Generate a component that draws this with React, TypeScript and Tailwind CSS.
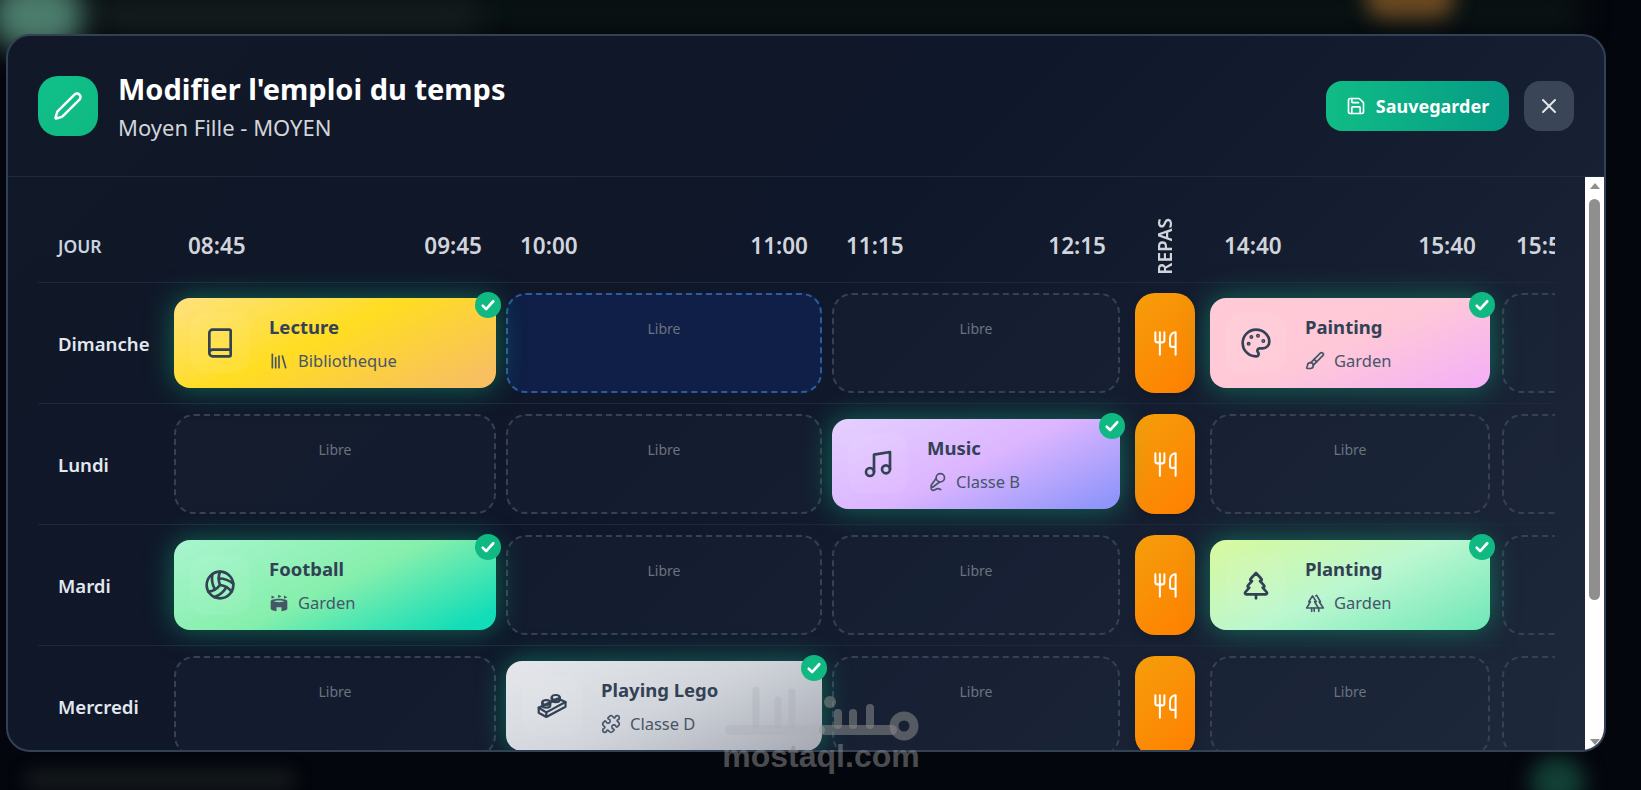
import React from "react";
import {
  Pen, Save, X, Book, Library, Palette, Brush, Music, MicVocal, Volleyball, Puzzle, TreePine, Utensils,
} from "lucide-react";
import { MdStadium } from "react-icons/md";

const cols = "grid grid-cols-[136px_332px_326px_303px_75px_292px_200px]";
const pads = ["", "pr-[10px]", "pr-[10px]", "pr-[15px]", "pr-[15px]", "pr-[12px]", "pr-[12px]"];

function LegoBrick({ size = 32 }: { size?: number }) {
  return (
    <svg width={size} height={size} viewBox="0 0 32 32" fill="none" stroke="currentColor" strokeWidth="2.2" strokeLinecap="round" strokeLinejoin="round">
      <path d="M2.7 17.7 L10.3 22.4 L29.5 12 L21.8 8.6 Z" />
      <path d="M2.7 17.7 V22.7 L10.3 27 L29.5 16.8 V12 M10.3 22.4 V27" />
      <ellipse cx="10.3" cy="12.6" rx="4" ry="2.4" />
      <path d="M6.3 12.6 V15.2 a4 2.4 0 0 0 8 0 V12.6" />
      <ellipse cx="19.7" cy="7.4" rx="4" ry="2.4" />
      <path d="M15.7 7.4 V9.8 a4 2.4 0 0 0 8 0 V7.4" />
    </svg>
  );
}

function TwinPines({ size = 20 }: { size?: number }) {
  return (
    <svg width={size} height={size} viewBox="0 0 24 24" fill="none" stroke="currentColor" strokeWidth="2" strokeLinecap="round" strokeLinejoin="round">
      <path d="M9 3.5 L4.5 10.5 H6.5 L2 18 H16 L11.5 10.5 H13.5 Z" />
      <path d="M13 3.5 L14 2.8 L18.5 10.5 H17 L22 18 H16" />
      <path d="M8 18 V22 M11 18 V22 M16.5 18 V22" />
    </svg>
  );
}

type CardData = {
  title: string;
  place: string;
  Icon: React.ElementType;
  PlaceIcon: React.ElementType;
  bg: string;
};

const lecture: CardData = { title: "Lecture", place: "Bibliotheque", Icon: Book, PlaceIcon: Library, bg: "bg-[linear-gradient(155deg,#fee27f_0%,#ffdd22_45%,#f8c060_92%)]" };
const painting: CardData = { title: "Painting", place: "Garden", Icon: Palette, PlaceIcon: Brush, bg: "bg-[linear-gradient(155deg,#ffcbd5_0%,#ffc8d8_50%,#f3aff8_100%)]" };
const music: CardData = { title: "Music", place: "Classe B", Icon: Music, PlaceIcon: MicVocal, bg: "bg-[linear-gradient(155deg,#e5d0ff_0%,#dcb5ff_50%,#8f95fa_95%)]" };
const football: CardData = { title: "Football", place: "Garden", Icon: Volleyball, PlaceIcon: MdStadium, bg: "bg-[linear-gradient(155deg,#a9f5cf_0%,#86efac_50%,#12ddb8_92%)]" };
const planting: CardData = { title: "Planting", place: "Garden", Icon: TreePine, PlaceIcon: TwinPines, bg: "bg-[linear-gradient(155deg,#d9f99d_0%,#bbf7d0_50%,#6ee7b7_100%)]" };
const lego: CardData = { title: "Playing Lego", place: "Classe D", Icon: LegoBrick, PlaceIcon: Puzzle, bg: "bg-[linear-gradient(155deg,#e5e7eb_0%,#d1d5db_50%,#a5a8b2_100%)]" };

type Slot = CardData | "libre" | "hover" | "repas";

const rows: { day: string; slots: Slot[] }[] = [
  { day: "Dimanche", slots: [lecture, "hover", "libre", "repas", painting, "libre"] },
  { day: "Lundi", slots: ["libre", "libre", music, "repas", "libre", "libre"] },
  { day: "Mardi", slots: [football, "libre", "libre", "repas", planting, "libre"] },
  { day: "Mercredi", slots: ["libre", lego, "libre", "repas", "libre", "libre"] },
];

function LessonCard({ data }: { data: CardData }) {
  const { Icon, PlaceIcon } = data;
  return (
    <div className={`relative my-[5px] flex h-[90px] items-center gap-[19px] rounded-2xl pl-4 shadow-[0_0_28px_rgba(16,185,129,0.5)] ${data.bg}`}>
      <div className="flex h-[60px] w-[60px] shrink-0 items-center justify-center rounded-2xl bg-white/5 text-[#334155]">
        <Icon size={32} />
      </div>
      <div className="flex flex-col gap-[12px] text-[#334155]">
        <div className="text-[18.5px] leading-6 font-bold">{data.title}</div>
        <div className="flex items-center gap-[9px] text-[16.5px] leading-5 text-[#475569]">
          <PlaceIcon size={20} />
          <span>{data.place}</span>
        </div>
      </div>
      <div className="absolute -top-[6px] -right-[5px] flex h-[26px] w-[26px] items-center justify-center rounded-full bg-[#10b981] text-white">
        <svg width="18" height="18" viewBox="0 0 24 24" fill="none" stroke="currentColor" strokeWidth="3.5" strokeLinecap="round" strokeLinejoin="round">
          <path d="M5 13l4.5 4.5L19 7" />
        </svg>
      </div>
    </div>
  );
}

function SlotCell({ slot }: { slot: Slot }) {
  if (slot === "libre" || slot === "hover") {
    const tone = slot === "hover" ? "border-[#2f5b9c] bg-[#0f1f47]" : "border-[#374151] bg-[#1e293b]/30";
    return (
      <div className={`h-[100px] rounded-[20px] border-2 border-dashed pt-[24px] text-center text-[14px] leading-5 text-[#6b7280] ${tone}`}>
        Libre
      </div>
    );
  }
  if (slot === "repas") {
    return (
      <div className="flex h-[100px] items-center justify-center rounded-[20px] bg-[linear-gradient(135deg,#f59e0b,#ff7f00)] text-white shadow-[0_4px_10px_rgba(0,0,0,0.2)]">
        <Utensils size={27} strokeWidth={1.8} />
      </div>
    );
  }
  return <LessonCard data={slot} />;
}

function Times({ a, b }: { a: string; b: string }) {
  return (
    <div className="flex justify-between px-[14px]">
      <span>{a}</span>
      <span>{b}</span>
    </div>
  );
}

export default function App() {
  return (
    <div className="relative h-[790px] w-[1641px] overflow-hidden bg-[#04060d] pt-[34px] pl-[6px] font-['Noto_Sans','Open_Sans',sans-serif]">
      <div className="absolute -top-[10px] left-[80px] h-[40px] w-[1500px] bg-[#0a1413] blur-[14px]" />
      <div className="absolute -top-[20px] -left-[10px] h-[70px] w-[95px] rounded-full bg-[#4b7c6c] blur-[14px]" />
      <div className="absolute top-[4px] left-[100px] h-[24px] w-[380px] rounded-full bg-[#1a2022] blur-[14px]" />
      <div className="absolute -top-[22px] left-[1365px] h-[40px] w-[90px] rounded-full bg-[#6b4a22] blur-[10px]" />
      <div className="absolute top-[770px] left-[25px] h-[20px] w-[270px] rounded-full bg-[#151a1c] blur-[8px]" />
      <div className="absolute top-[757px] left-[1530px] h-[50px] w-[55px] rounded-full bg-[#123f36] blur-[10px]" />

      <div className="relative flex h-[718px] w-[1600px] flex-col overflow-hidden rounded-[24px] border-2 border-[#334155] bg-[linear-gradient(135deg,#111827,#0f172a_45%,#1e293b)]">
        <header className="flex h-[141px] shrink-0 items-center justify-between border-b border-[#1b2d3a] pr-[30px] pl-[30px]">
          <div className="flex items-center gap-[20px]">
            <div className="flex h-[60px] w-[60px] items-center justify-center rounded-[20px] bg-[linear-gradient(135deg,#10c08a,#10b981)] text-white">
              <Pen size={30} />
            </div>
            <div className="flex flex-col gap-[6px]">
              <h1 className="text-[29px] leading-9 font-bold text-white">Modifier l'emploi du temps</h1>
              <p className="text-[22px] leading-7 text-[#d1d5db]">Moyen Fille - MOYEN</p>
            </div>
          </div>
          <div className="flex items-center gap-[15px]">
            <button className="flex h-[50px] w-[183px] items-center justify-center gap-[10px] rounded-2xl bg-[linear-gradient(90deg,#10bc85,#059b86)] text-[18px] font-bold text-white">
              <Save size={20} />
              Sauvegarder
            </button>
            <button className="flex h-[50px] w-[50px] items-center justify-center rounded-2xl bg-[#3a4558] text-[#e5e7eb]">
              <X size={24} />
            </button>
          </div>
        </header>

        <div className="flex min-h-0 flex-1">
          <div className="min-w-0 flex-1 overflow-hidden pr-[30px] pl-[30px]">
            <div className="overflow-hidden">
              <div className={`${cols} h-[106px] items-center border-b border-[#1b2a3a] pt-[33px] text-[22.5px] leading-7 font-semibold text-[#d1d5db]`}>
                <div className="pl-[20px] text-[17.5px] text-[#cbd5e1]">JOUR</div>
                <div className={pads[1]}><Times a="08:45" b="09:45" /></div>
                <div className={pads[2]}><Times a="10:00" b="11:00" /></div>
                <div className={pads[3]}><Times a="11:15" b="12:15" /></div>
                <div className={`${pads[4]} flex justify-center`}>
                  <span className="rotate-180 text-[19px] leading-5 [writing-mode:vertical-rl]">REPAS</span>
                </div>
                <div className={pads[5]}><Times a="14:40" b="15:40" /></div>
                <div className={pads[6]}><div className="px-[14px]">15:50</div></div>
              </div>
              {rows.map((row) => (
                <div key={row.day} className={`${cols} h-[121px] border-b border-[#1b2a3a] pt-[10px]`}>
                  <div className="flex h-[102px] items-center pl-[20px] text-[18.6px] font-semibold text-[#e2e8f0]">{row.day}</div>
                  {row.slots.map((slot, i) => (
                    <div key={i} className={pads[i + 1]}>
                      <SlotCell slot={slot} />
                    </div>
                  ))}
                </div>
              ))}
            </div>
          </div>

          <aside className="flex w-[19px] shrink-0 flex-col items-center bg-white">
            <div className="mt-[6px] h-0 w-0 border-x-[5px] border-b-[6px] border-x-transparent border-b-[#8f8f8f]" />
            <div className="mt-[10px] h-[401px] w-[11px] rounded-full bg-[#8f8f8f]" />
            <div className="mt-auto mb-[5px] h-0 w-0 border-x-[5px] border-t-[6px] border-x-transparent border-t-[#8f8f8f]" />
          </aside>
        </div>
      </div>

      <div className="absolute top-[678px] left-[722px] flex w-[198px] flex-col items-center text-[#8a8a8a]/55">
        <svg width="198" height="65" viewBox="0 0 198 65" fill="none" stroke="currentColor" strokeWidth="9" strokeLinecap="round">
          <circle cx="182" cy="48" r="10" />
          <path d="M102 52 H170" strokeWidth="10" />
          <path d="M116 47 V35 M131 47 V35 M148 47 V30" strokeWidth="8" />
          <circle cx="108" cy="24" r="6" fill="currentColor" stroke="none" />
          <g stroke="#a9acb5" strokeOpacity="0.35">
            <path d="M8 52 H98" strokeWidth="10" />
            <path d="M34 47 V12 M56 47 V22 M70 47 V14" strokeWidth="7" />
          </g>
        </svg>
        <div className="-mt-[2px] font-['Liberation_Sans',sans-serif] text-[32px] leading-[30px] font-bold">mostaql.com</div>
      </div>
    </div>
  );
}
